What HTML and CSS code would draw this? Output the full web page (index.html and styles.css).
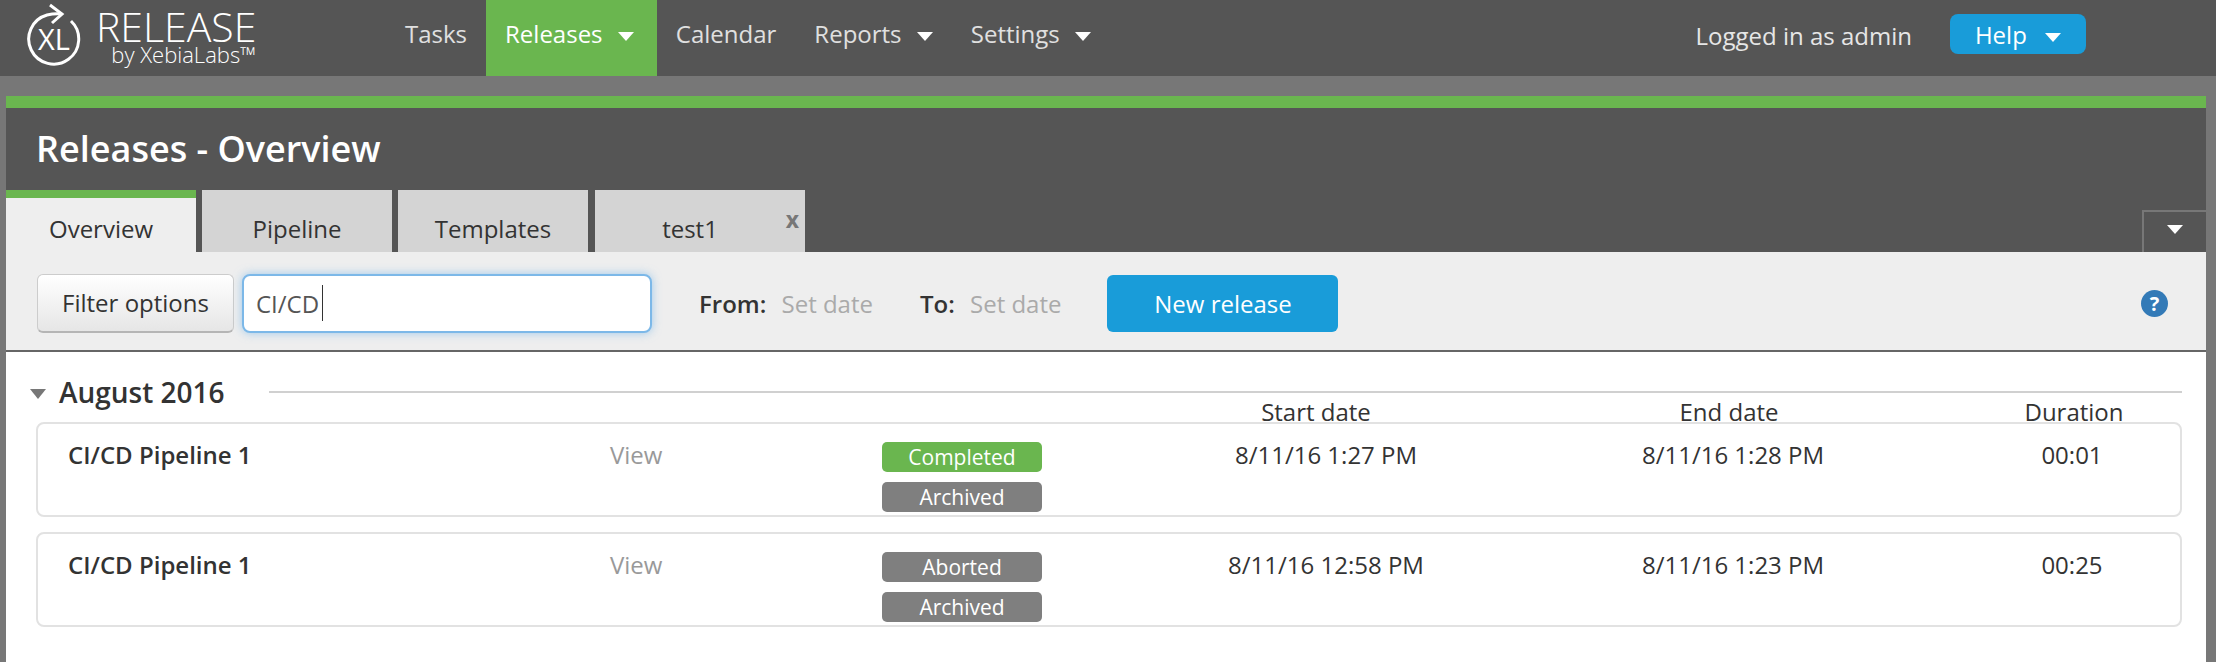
FILE: index.html
```html
<!DOCTYPE html>
<html lang="en">
<head>
    <meta charset="UTF-8">
    <title>Releases - Overview</title>
    <link rel="stylesheet" href="styles.css">
</head>
<body>
    <header class="topbar">
        <div class="brand">
            <svg class="brand-mark" width="62" height="70" viewBox="0 0 62 70">
                <path d="M46 18 A25 25 0 1 1 22 12 Q30 10 37 11" fill="none" stroke="#fff" stroke-width="3"/>
                <path d="M25 2 L37 11 L27 20" fill="none" stroke="#fff" stroke-width="3"/>
                <text x="29" y="47" text-anchor="middle" class="brand-xl">XL</text>
            </svg>
            <div class="brand-text">
                <div class="brand-name">RELEASE</div>
                <div class="brand-by">by XebiaLabs™</div>
            </div>
        </div>
        <nav class="nav">
            <a class="nav-item">Tasks</a>
            <a class="nav-item active">Releases <span class="caret"></span></a>
            <a class="nav-item">Calendar</a>
            <a class="nav-item">Reports <span class="caret"></span></a>
            <a class="nav-item">Settings <span class="caret"></span></a>
        </nav>
        <div class="user">Logged in as admin</div>
        <button class="help-btn">Help <span class="caret"></span></button>
    </header>

    <main class="panel">
        <div class="panel-head">
            <h1>Releases - Overview</h1>
            <div class="tabs">
                <div class="tab active">Overview</div>
                <div class="tab">Pipeline</div>
                <div class="tab">Templates</div>
                <div class="tab closable">test1<span class="tab-close">x</span></div>
                <div class="tab-menu"><span class="caret"></span></div>
            </div>
        </div>

        <div class="toolbar">
            <button class="filter-btn">Filter options</button>
            <div class="search">CI/CD<span class="text-cursor"></span></div>
            <div class="date-field from"><b>From:</b> <span>Set date</span></div>
            <div class="date-field to"><b>To:</b> <span>Set date</span></div>
            <button class="new-btn">New release</button>
            <div class="help-icon">?</div>
        </div>

        <section class="releases">
            <div class="month">
                <span class="month-arrow"></span>
                <h2>August 2016</h2>
                <span class="month-line"></span>
            </div>
            <div class="columns">
                <div>Start date</div>
                <div>End date</div>
                <div>Duration</div>
            </div>
            <div class="card">
                <div class="name">CI/CD Pipeline 1</div>
                <div class="view">View</div>
                <div class="badges">
                    <span class="badge green">Completed</span>
                    <span class="badge">Archived</span>
                </div>
                <div class="cell">8/11/16 1:27 PM</div>
                <div class="cell">8/11/16 1:28 PM</div>
                <div class="cell">00:01</div>
            </div>
            <div class="card">
                <div class="name">CI/CD Pipeline 1</div>
                <div class="view">View</div>
                <div class="badges">
                    <span class="badge">Aborted</span>
                    <span class="badge">Archived</span>
                </div>
                <div class="cell">8/11/16 12:58 PM</div>
                <div class="cell">8/11/16 1:23 PM</div>
                <div class="cell">00:25</div>
            </div>
        </section>
    </main>
</body>
</html>
```

FILE: styles.css
```css
html, body {
    height: 100%;
}
body {
    margin: 0;
    background: #777;
    color: #333;
    font-family: "Open Sans", Arial, sans-serif;
    font-size: 24px;
    display: flex;
    flex-direction: column;
    overflow: hidden;
}
button {
    font-family: inherit;
    font-size: inherit;
}
.caret {
    display: inline-block;
    width: 0;
    height: 0;
    border-left: 8px solid transparent;
    border-right: 8px solid transparent;
    border-top: 9px solid #fff;
    vertical-align: middle;
    margin-left: 9px;
}

/* top bar */
.topbar {
    height: 76px;
    background: #555;
    display: flex;
    align-items: center;
    flex-shrink: 0;
}
.brand {
    width: 386px;
    height: 76px;
    display: flex;
    flex-shrink: 0;
    color: #fff;
}
.brand-mark {
    margin: 3px 0 0 25px;
}
.brand-xl {
    font-family: "Open Sans", Arial, sans-serif;
    font-size: 29px;
    fill: #fff;
}
.brand-text {
    margin-left: 9px;
    width: 160px;
    text-align: right;
}
.brand-name {
    font-size: 41px;
    font-weight: 300;
    line-height: 35px;
    margin-top: 9px;
}
.brand-by {
    font-size: 22px;
    font-weight: 300;
    line-height: 20px;
}
.nav {
    display: flex;
    height: 76px;
}
.nav-item {
    padding: 0 19px;
    line-height: 68px;
    color: #e0e0e0;
}
.nav-item.active {
    padding-right: 23px;
    background: #6ab64f;
    color: #fff;
}
.user {
    margin-left: auto;
    margin-bottom: 6px;
    color: #e6e6e6;
}
.help-btn {
    width: 136px;
    height: 40px;
    margin: 0 130px 8px 38px;
    padding: 0;
    border: 0;
    border-radius: 8px;
    background: #199cd9;
    color: #fff;
}
.help-btn .caret {
    margin-left: 12px;
}

/* panel */
.panel {
    flex: 1;
    margin: 20px 10px 0 6px;
    background: #fff;
    border-top: 12px solid #6ab64f;
}
.panel-head {
    height: 144px;
    background: #555;
    display: flex;
    flex-direction: column;
    justify-content: space-between;
}
h1 {
    margin: 20px 0 0 30px;
    color: #fff;
    font-size: 36px;
    font-weight: 600;
    line-height: 42px;
}
.tabs {
    display: flex;
    gap: 6px;
    height: 62px;
    align-items: flex-end;
}
.tab {
    position: relative;
    width: 190px;
    height: 62px;
    padding-top: 23px;
    background: #d4d4d4;
    text-align: center;
    line-height: 32px;
    box-sizing: border-box;
}
.tab.active {
    padding-top: 15px;
    background: #eee;
    border-top: 8px solid #6ab64f;
}
.tab.closable {
    width: 210px;
    margin-left: 1px;
    padding-right: 20px;
}
.tab-close {
    position: absolute;
    top: 17px;
    right: 6px;
    font-size: 23px;
    font-weight: 700;
    line-height: 24px;
    color: #777;
}
.tab-menu {
    width: 64px;
    height: 42px;
    margin-left: auto;
    box-sizing: border-box;
    border: 2px solid #777;
    border-bottom: 0;
    border-right: 0;
    text-align: center;
    line-height: 30px;
}
.tab-menu .caret {
    margin-left: 0;
}

/* toolbar */
.toolbar {
    height: 94px;
    background: #eee;
    border-bottom: 2px solid #666;
    display: flex;
    align-items: center;
    padding: 4px 38px 0 31px;
}
.filter-btn {
    width: 197px;
    height: 59px;
    padding: 0;
    border: 1px solid #ccc;
    border-bottom: 2px solid #b5b5b5;
    border-radius: 6px;
    background: linear-gradient(#fff, #e6e6e6);
    color: #333;
}
.search {
    width: 410px;
    height: 59px;
    margin-left: 8px;
    box-sizing: border-box;
    padding-left: 12px;
    border: 2px solid #7cb8e8;
    border-radius: 8px;
    background: #fff;
    box-shadow: 0 0 10px rgba(102, 175, 233, 0.6);
    display: flex;
    align-items: center;
    color: #555;
}
.text-cursor {
    width: 1px;
    height: 36px;
    margin-left: 3px;
    background: #333;
}
.date-field b {
    font-weight: 600;
    margin-right: 9px;
}
.date-field span {
    color: #aaa;
}
.date-field.from {
    margin-left: 47px;
}
.date-field.to {
    margin-left: 47px;
}
.new-btn {
    width: 231px;
    height: 57px;
    margin-left: 46px;
    padding: 0;
    border: 0;
    border-radius: 6px;
    background: #199cd9;
    color: #fff;
}
.help-icon {
    width: 27px;
    height: 27px;
    margin-left: auto;
    border-radius: 50%;
    background: #337ab7;
    color: #fff;
    font-size: 20px;
    font-weight: 700;
    line-height: 27px;
    text-align: center;
}

/* release list */
.releases {
    padding: 26px 24px 0;
}
.month {
    display: flex;
    align-items: center;
    height: 28px;
}
.month-arrow {
    width: 0;
    height: 0;
    border-left: 8px solid transparent;
    border-right: 8px solid transparent;
    border-top: 10px solid #777;
    margin-top: 3px;
}
h2 {
    margin: 0 44px 0 13px;
    font-size: 28px;
    font-weight: 600;
    line-height: 28px;
    color: #333;
}
.month-line {
    flex: 1;
    height: 2px;
    background: #d0d0d0;
}
.columns {
    display: grid;
    grid-template-columns: 1012px 548px 278px 1fr;
    height: 20px;
    margin-top: -4px;
    text-align: center;
    line-height: 20px;
}
.columns div:first-child {
    grid-column: 2;
}
.columns div:last-child {
    width: 216px;
    justify-self: end;
}
.card {
    display: grid;
    grid-template-columns: 542px 272px 160px 568px 246px 1fr;
    height: 95px;
    box-sizing: border-box;
    margin: 0 0 15px 6px;
    padding: 18px 0 0 30px;
    border: 2px solid #e2e2e2;
    border-radius: 8px;
    line-height: 26px;
}
.name {
    font-weight: 600;
}
.view {
    color: #999;
}
.badges {
    display: flex;
    flex-direction: column;
    gap: 10px;
}
.badge {
    height: 30px;
    border-radius: 5px;
    background: #7f7f7f;
    color: #fff;
    font-size: 21px;
    line-height: 30px;
    text-align: center;
}
.badge.green {
    background: #6ab64f;
}
.cell {
    text-align: center;
}
.cell:last-child {
    width: 216px;
    justify-self: end;
}
```
